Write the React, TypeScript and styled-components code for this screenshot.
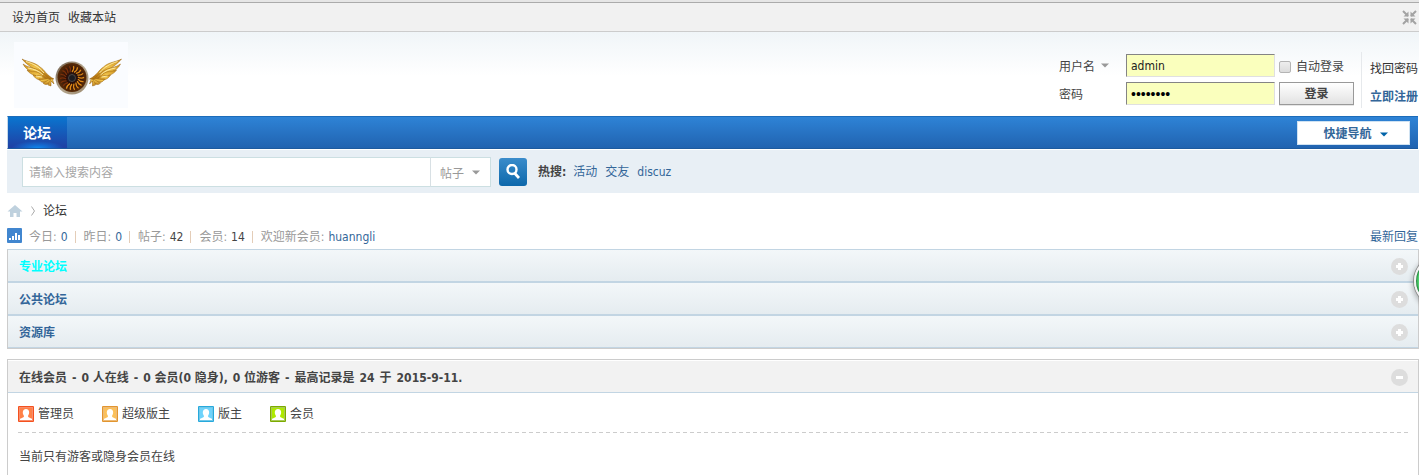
import React from "react";
import styled, { createGlobalStyle } from "styled-components";

const font = `"DejaVu Sans Condensed", "Noto Sans CJK SC", sans-serif`;

const GlobalStyle = createGlobalStyle`
  *, *::before, *::after { box-sizing: border-box; }
  body {
    margin: 0;
    background: #fff;
    color: #444;
    font: 12px/18px ${font};
    overflow-x: hidden;
  }
  html { scrollbar-width: none; }
  a { color: #333; text-decoration: none; }
  a:hover { text-decoration: underline; }
  button, input, select { font: inherit; color: inherit; }
  ul { list-style: none; margin: 0; padding: 0; }
  h1, h2, p { margin: 0; font-size: 12px; }
  svg { display: block; flex: none; }
`;

const TopBar = styled.div`
  display: flex;
  align-items: center;
  gap: 8px;
  height: 32px;
  padding: 4px 2px 0 12px;
  background: #f1f1f1;
  border-bottom: 1px solid #ccc;
  box-shadow: inset 0 2px #e6e6e6, inset 0 3px #ababab;
`;

const PlainButton = styled.button`
  display: flex;
  padding: 0;
  border: 0;
  background: none;
  cursor: pointer;
`;

const Spacer = styled.div`
  flex: 1;
`;

const Page = styled.div`
  padding: 0 0 0 7px;
  background: linear-gradient(#f0f5f8, #fff 44px) no-repeat;
`;

const Header = styled.header`
  display: flex;
  align-items: flex-start;
  justify-content: space-between;
  height: 84px;
  padding: 10px 1px 0 7px;
`;

const LoginForm = styled.form`
  display: flex;
  align-items: flex-start;
  padding-top: 10px;
`;

const LoginGrid = styled.div`
  display: grid;
  grid-template-columns: 67px 149px 75px;
  grid-auto-rows: 23px;
  gap: 5px 0;
  align-items: center;
  padding: 2px 7px 0 0;

  & > :nth-child(3n) {
    margin-left: 4px;
    margin-right: -4px;
  }
`;

const SelectBox = styled.span<{ $color: string }>`
  display: grid;
  grid-template-columns: 1fr;
  align-items: center;
  color: ${(p) => p.$color};

  select,
  svg {
    grid-area: 1 / 1;
  }
  svg {
    justify-self: end;
    pointer-events: none;
  }
  select {
    appearance: none;
    width: 100%;
    padding: 2px 0 0;
    border: 0;
    background: none;
    outline: 0;
  }
`;

const UserSelect = styled(SelectBox)`
  width: 50px;
`;

const PasswordLabel = styled.label`
  padding-top: 3px;
`;

const TextField = styled.input`
  width: 100%;
  height: 23px;
  padding: 0 4px;
  background: #faffbd;
  border: 1px solid;
  border-color: #848484 #e0e0e0 #e0e0e0 #848484;
  outline: 0;
  color: #222;

  &[type="password"] {
    color: #000;
    font-family: "Liberation Sans", sans-serif;
    font-size: 14px;
  }
`;

const AutoLogin = styled.label`
  display: flex;
  align-items: center;
  gap: 5px;
  padding-top: 3px;
  white-space: nowrap;

  input {
    appearance: none;
    width: 12px;
    height: 12px;
    margin: 0;
    border: 1px solid #b4b4b4;
    border-radius: 2px;
    background: linear-gradient(#eee, #dcdcdc);
  }
`;

const LoginButton = styled.button`
  height: 23px;
  padding: 0;
  border: 1px solid #999;
  background: linear-gradient(#fff, #e2e2e2);
  box-shadow: 0 1px #e6e6e6;
  font-weight: 700;
`;

const LoginLinks = styled.div`
  display: grid;
  grid-auto-rows: 23px;
  gap: 5px;
  align-items: center;
  height: 56px;
  margin-left: 4px;
  padding: 5px 0 0 8px;
  border-left: 1px solid #e6e9ec;
`;

const StrongLink = styled.a`
  color: #369;
  font-weight: 700;
`;

const Nav = styled.nav`
  display: flex;
  align-items: center;
  justify-content: space-between;
  height: 33px;
  margin-right: 1px;
  padding-right: 8px;
  background: linear-gradient(#2e83d6, #2163b0);
  border-top: 1px solid #1c6cba;
  border-bottom: 1px solid #1d5a9e;
  border-left: 1px solid #c5d8e8;
`;

const NavTab = styled.a`
  display: flex;
  align-items: center;
  height: 31px;
  padding: 0 16px 0 15px;
  background: radial-gradient(26px 7px at 50% 100%, #0d86ee, transparent),
    linear-gradient(#0a75cf, #2040a4);
  color: #fff;
  font-size: 14px;
  font-weight: 700;
`;

const QuickNav = styled.button`
  display: flex;
  align-items: center;
  justify-content: center;
  gap: 8px;
  width: 113px;
  height: 24px;
  padding: 3px 0 0 4px;
  background: #fff;
  border: 1px solid #cfe2f2;
  color: #369;
  font-weight: 700;
`;

const SearchBar = styled.form`
  display: flex;
  align-items: center;
  height: 43px;
  margin-top: 1px;
  padding-left: 15px;
  background: #e8eff5;
`;

const SearchInput = styled.input`
  width: 409px;
  height: 30px;
  padding: 3px 6px 0;
  background: #fff;
  border: 1px solid #ccdfe2;
  border-right-color: #d8e0e4;
  outline: 0;

  &::placeholder {
    color: #a6a6a6;
    opacity: 1;
  }
`;

const SearchType = styled(SelectBox)`
  width: 60px;
  height: 30px;
  padding: 2px 10px 0 9px;
  background: #fff;
  border: 1px solid #ccdfe2;
  border-left: 0;
`;

const SearchButton = styled.button`
  display: grid;
  place-items: center;
  width: 28px;
  height: 28px;
  margin: 0 11px 0 8px;
  padding: 0;
  background: linear-gradient(#3a8ccb, #0d68ab);
  border: 0;
  border-radius: 3px;
`;

const HotWords = styled.p`
  display: flex;
  gap: 8px;
  padding-top: 1px;

  strong {
    margin-right: -1px;
  }
  a {
    color: #369;
  }
`;

const Crumbs = styled.nav`
  display: flex;
  align-items: center;
  gap: 8px;
  height: 34px;
  padding-top: 1px;
`;

const Stats = styled.div`
  display: flex;
  align-items: center;
  height: 18px;
  padding: 2px 1px 0 0;
  margin-bottom: 4px;
  color: #999;

  em {
    color: #444;
    font-style: normal;
  }
  em,
  a {
    margin-left: 4px;
  }
  a,
  em[data-link] {
    color: #369;
  }
  i {
    width: 1px;
    height: 12px;
    margin: 0 8px 0 7px;
    background: #e4cdb8;
  }
  svg {
    margin: 0 7px 3px 0;
  }
`;

const BoardList = styled.section`
  border: 1px solid #ccc;
  border-top-color: #c2d5e3;
`;

const BarRow = styled.header<{ $plain?: boolean; $color?: string }>`
  display: flex;
  align-items: center;
  justify-content: space-between;
  height: ${(p) => (p.$plain ? "32px" : "33px")};
  padding: 2px 10px 0 11px;
  background: ${(p) => (p.$plain ? "#f2f2f2" : "linear-gradient(#f3f7f9, #e5ecf0)")};
  border-bottom: ${(p) => (p.$plain ? "1px" : "2px")} solid #c2d5e3;

  &:last-child {
    height: 32px;
    border-bottom-width: 1px;
  }
  h2 {
    display: flex;
    gap: 5px;
  }
  h2,
  a {
    color: ${(p) => p.$color || "#369"};
  }
`;

const OnlinePanel = styled.section`
  margin-top: 10px;
  padding-top: 1px;
  background: #fff;
  border: 1px solid #ccc;
`;

const OnlineBody = styled.div`
  padding: 0 10px;
  min-height: 81px;
`;

const Legend = styled.ul`
  display: flex;
  align-items: center;
  gap: 28px;
  height: 40px;
  padding-top: 2px;
  background: repeating-linear-gradient(90deg, #ccc 0 4px, transparent 4px 7px) bottom / 100% 1px no-repeat;

  li {
    display: flex;
    align-items: center;
    gap: 4px;
  }
`;

const Guests = styled.p`
  padding: 15px 1px 9px;
`;

const FloatBall = styled.div`
  position: fixed;
  top: 256px;
  right: -45px;
  width: 50px;
  height: 50px;
  background: radial-gradient(circle, #4fd06c 21px, #1f7a3a 23px);
  border: 2px solid #f4f4f4;
  border-radius: 50%;
  box-shadow: 0 0 0 1px #8b8b8b, 0 2px 5px 2px rgba(0, 0, 0, 0.25);
`;

const Arrow = ({ color }: { color: string }) => (
  <svg width="8" height="5" viewBox="0 0 8 5" aria-hidden="true">
    <path d="M0 0.5h8L4 4.5z" fill={color} />
  </svg>
);

const blades = Array.from({ length: 18 }, (_, i) => i * 20);

const feathers = [
  "M8 17C13 20 21 20 26 25C31 28 32 33 40 37L34 37C28 30 15 26 8 17z",
  "M9 22C14 26 20 25 26 29C31 32 33 35 37 38L32 37C26 32 13 31 9 22z",
  "M13 28C18 30 22 28 28 33L35 39L28 36C23 33 17 34 13 28z",
  "M19 33C24 34 27 33 32 37L30 39C26 38 22 38 19 33z",
  "M25 37C29 38 31 36 36 37L34 40C30 41 27 41 25 37z",
  "M29 41C31 41 33 38 37 37L37 40C35 42 32 44 29 41z",
  "M34 43C35 41 36 38 38 36L40 42L37 39L37 44z",
];

const Wing = () => (
  <g fill="url(#gold)" stroke="#9b6511" strokeWidth="0.5">
    {feathers.map((d) => (
      <path key={d} d={d} />
    ))}
    <path d="M12 19.5C20 22 25 25 30 31M14 26C20 27 25 29 29 33M22 34L28 35" fill="none" stroke="#ffeeaa" strokeWidth="0.9" />
  </g>
);

const Logo = () => (
  <svg width="114" height="66" viewBox="0 0 114 66" role="img" aria-label="Logo">
    <defs>
      <radialGradient id="turbine">
        <stop offset="0" stopColor="#222" />
        <stop offset="0.4" stopColor="#2a0e08" />
        <stop offset="1" stopColor="#5a2c08" />
      </radialGradient>
      <linearGradient id="rim" x2="1" y2="1">
        <stop offset="0" stopColor="#6b5a49" />
        <stop offset="0.5" stopColor="#b5a78f" />
        <stop offset="1" stopColor="#9c8a70" />
      </linearGradient>
      <linearGradient id="gold" x2="0.4" y2="1">
        <stop offset="0" stopColor="#c88a18" />
        <stop offset="0.5" stopColor="#f0c24a" />
        <stop offset="1" stopColor="#b87a14" />
      </linearGradient>
    </defs>
    <rect width="114" height="66" fill="#fafcff" />
    <Wing />
    <g transform="translate(115.5) scale(-1 1)">
      <Wing />
    </g>
    <circle cx="58" cy="36" r="16.500" fill="url(#rim)" />
    <circle cx="58" cy="35.500" r="14.500" fill="url(#turbine)" />
    {blades.map((a) => (
      <path
        key={a}
        d="M58 30Q60.500 27 59.500 24"
        transform={`rotate(${a} 58 36)`}
        fill="none"
        stroke={a < 220 ? "#e08a17" : "#7a300a"}
        strokeWidth="1.200"
      />
    ))}
    <circle cx="58" cy="36" r="3.500" fill="#1c1c20" stroke="#55504c" strokeWidth="0.800" />
  </svg>
);

const ShrinkIcon = () => (
  <svg width="15" height="15" viewBox="0 0 15 15" aria-hidden="true">
    <path d="M1 1l5 5M14 1L9 6M1 14l5-5M14 14L9 9" stroke="#a3a3a3" strokeWidth="2" />
    <path d="M6.500 1.500v5h-5zM8.500 1.500v5h5zM6.500 13.500v-5h-5zM8.500 13.500v-5h5z" fill="#a3a3a3" />
  </svg>
);

const SearchIcon = () => (
  <svg width="14" height="15" viewBox="0 0 14 15" aria-hidden="true">
    <circle cx="6" cy="5.500" r="4.500" fill="none" stroke="#fff" strokeWidth="2.400" />
    <path d="M8.500 9l4.500 5" stroke="#fff" strokeWidth="2.800" />
  </svg>
);

const HomeIcon = () => (
  <svg width="16" height="14" viewBox="0 0 16 14" aria-hidden="true">
    <path d="M8 1L0.500 7.500H3V13H6.500V9h3v4H13V7.500h2.500z" fill="#bfd1de" />
  </svg>
);

const CrumbArrow = () => (
  <svg width="4" height="10" viewBox="0 0 4 10" aria-hidden="true">
    <path d="M0.500 0.500L3.500 5L0.500 9.500" fill="none" stroke="#aaa" />
  </svg>
);

const ChartIcon = () => (
  <svg width="15" height="15" viewBox="0 0 15 15" aria-hidden="true">
    <rect width="15" height="15" rx="1" fill="#4186cf" />
    <path d="M2 10h2v2H2zM5 8h2v4H5zM8 5h2v7H8zM11 7h2v5h-2z" fill="#fff" />
  </svg>
);

const ToggleIcon = ({ open }: { open?: boolean }) => (
  <svg width="17" height="17" viewBox="0 0 17 17" aria-hidden="true">
    <circle cx="8.500" cy="8.500" r="8.500" fill="#ddd" />
    <path d={open ? "M5 7h7v3H5z" : "M5 7h2V5h3v2h2v3h-2v2H7v-2H5z"} fill="#fff" />
  </svg>
);

const UserIcon = ({ dark, light }: { dark: string; light: string }) => (
  <svg width="16" height="16" viewBox="0 0 16 16" aria-hidden="true">
    <rect width="16" height="16" rx="1" fill={dark} />
    <rect x="1" y="1" width="14" height="14" fill="#fff" opacity="0.350" />
    <rect x="2" y="2" width="12" height="12" fill={light} />
    <path d="M2 14v-1c0-1 4-1 4-3C4 7 4.500 3 8 3s4 4 2 7c0 2 4 2 4 3v1z" fill="#fff" />
  </svg>
);

const boards = [
  { name: "专业论坛", color: "#00ffff" },
  { name: "公共论坛", color: "#336699" },
  { name: "资源库", color: "#336699" },
];

const groups = [
  { name: "管理员", dark: "#f4511e", light: "#ff8148" },
  { name: "超级版主", dark: "#e2952f", light: "#fbc05a" },
  { name: "版主", dark: "#26a9dc", light: "#6fd3fb" },
  { name: "会员", dark: "#7cab00", light: "#aeea00" },
];

const onlineSummary = [
  "-",
  "0 人在线",
  "-",
  "0 会员(0 隐身),",
  "0 位游客",
  "-",
  "最高记录是",
  "24",
  "于",
  "2015-9-11.",
];

export default function App() {
  return (
    <>
      <GlobalStyle />
      <TopBar>
        <a href="#home">设为首页</a>
        <a href="#favorite">收藏本站</a>
        <Spacer />
        <PlainButton type="button" aria-label="切换到窄版">
          <ShrinkIcon />
        </PlainButton>
      </TopBar>
      <Page>
        <Header>
          <a href="#index">
            <Logo />
          </a>
          <LoginForm>
            <LoginGrid>
              <UserSelect $color="#444">
                <select aria-label="登录方式">
                  <option>用户名</option>
                </select>
                <Arrow color="#999" />
              </UserSelect>
              <TextField aria-label="用户名" defaultValue="admin" />
              <AutoLogin>
                <input type="checkbox" />
                自动登录
              </AutoLogin>
              <PasswordLabel htmlFor="password">密码</PasswordLabel>
              <TextField id="password" type="password" defaultValue="password" />
              <LoginButton type="button">登录</LoginButton>
            </LoginGrid>
            <LoginLinks>
              <a href="#lost">找回密码</a>
              <StrongLink href="#register">立即注册</StrongLink>
            </LoginLinks>
          </LoginForm>
        </Header>
        <Nav>
          <NavTab href="#forum">论坛</NavTab>
          <QuickNav type="button">
            快捷导航
            <Arrow color="#0063a8" />
          </QuickNav>
        </Nav>
        <SearchBar>
          <SearchInput aria-label="搜索" placeholder="请输入搜索内容" />
          <SearchType $color="#999">
            <select aria-label="搜索类型">
              <option>帖子</option>
            </select>
            <Arrow color="#999" />
          </SearchType>
          <SearchButton type="button" aria-label="搜索">
            <SearchIcon />
          </SearchButton>
          <HotWords>
            <strong>热搜:</strong>
            <a href="#huodong">活动</a>
            <a href="#jiaoyou">交友</a>
            <a href="#discuz">discuz</a>
          </HotWords>
        </SearchBar>
        <Crumbs>
          <a href="#index" aria-label="首页">
            <HomeIcon />
          </a>
          <CrumbArrow />
          <a href="#forum">论坛</a>
        </Crumbs>
        <Stats>
          <ChartIcon />
          今日:<em data-link>0</em>
          <i />
          昨日:<em data-link>0</em>
          <i />
          帖子:<em>42</em>
          <i />
          会员:<em>14</em>
          <i />
          欢迎新会员:<a href="#member">huanngli</a>
          <Spacer />
          <a href="#latest">最新回复</a>
        </Stats>
        <BoardList>
          {boards.map((b) => (
            <BarRow key={b.name} $color={b.color}>
              <h2>
                <a href="#board">{b.name}</a>
              </h2>
              <PlainButton type="button" aria-label="展开">
                <ToggleIcon />
              </PlainButton>
            </BarRow>
          ))}
        </BoardList>
        <OnlinePanel>
          <BarRow $plain $color="#444">
            <h2>
              <a href="#online">在线会员</a>
              {onlineSummary.map((part, i) => (
                <span key={i}>{part}</span>
              ))}
            </h2>
            <PlainButton type="button" aria-label="收起">
              <ToggleIcon open />
            </PlainButton>
          </BarRow>
          <OnlineBody>
            <Legend>
              {groups.map((g) => (
                <li key={g.name}>
                  <UserIcon dark={g.dark} light={g.light} />
                  {g.name}
                </li>
              ))}
            </Legend>
            <Guests>当前只有游客或隐身会员在线</Guests>
          </OnlineBody>
        </OnlinePanel>
      </Page>
      <FloatBall />
    </>
  );
}
